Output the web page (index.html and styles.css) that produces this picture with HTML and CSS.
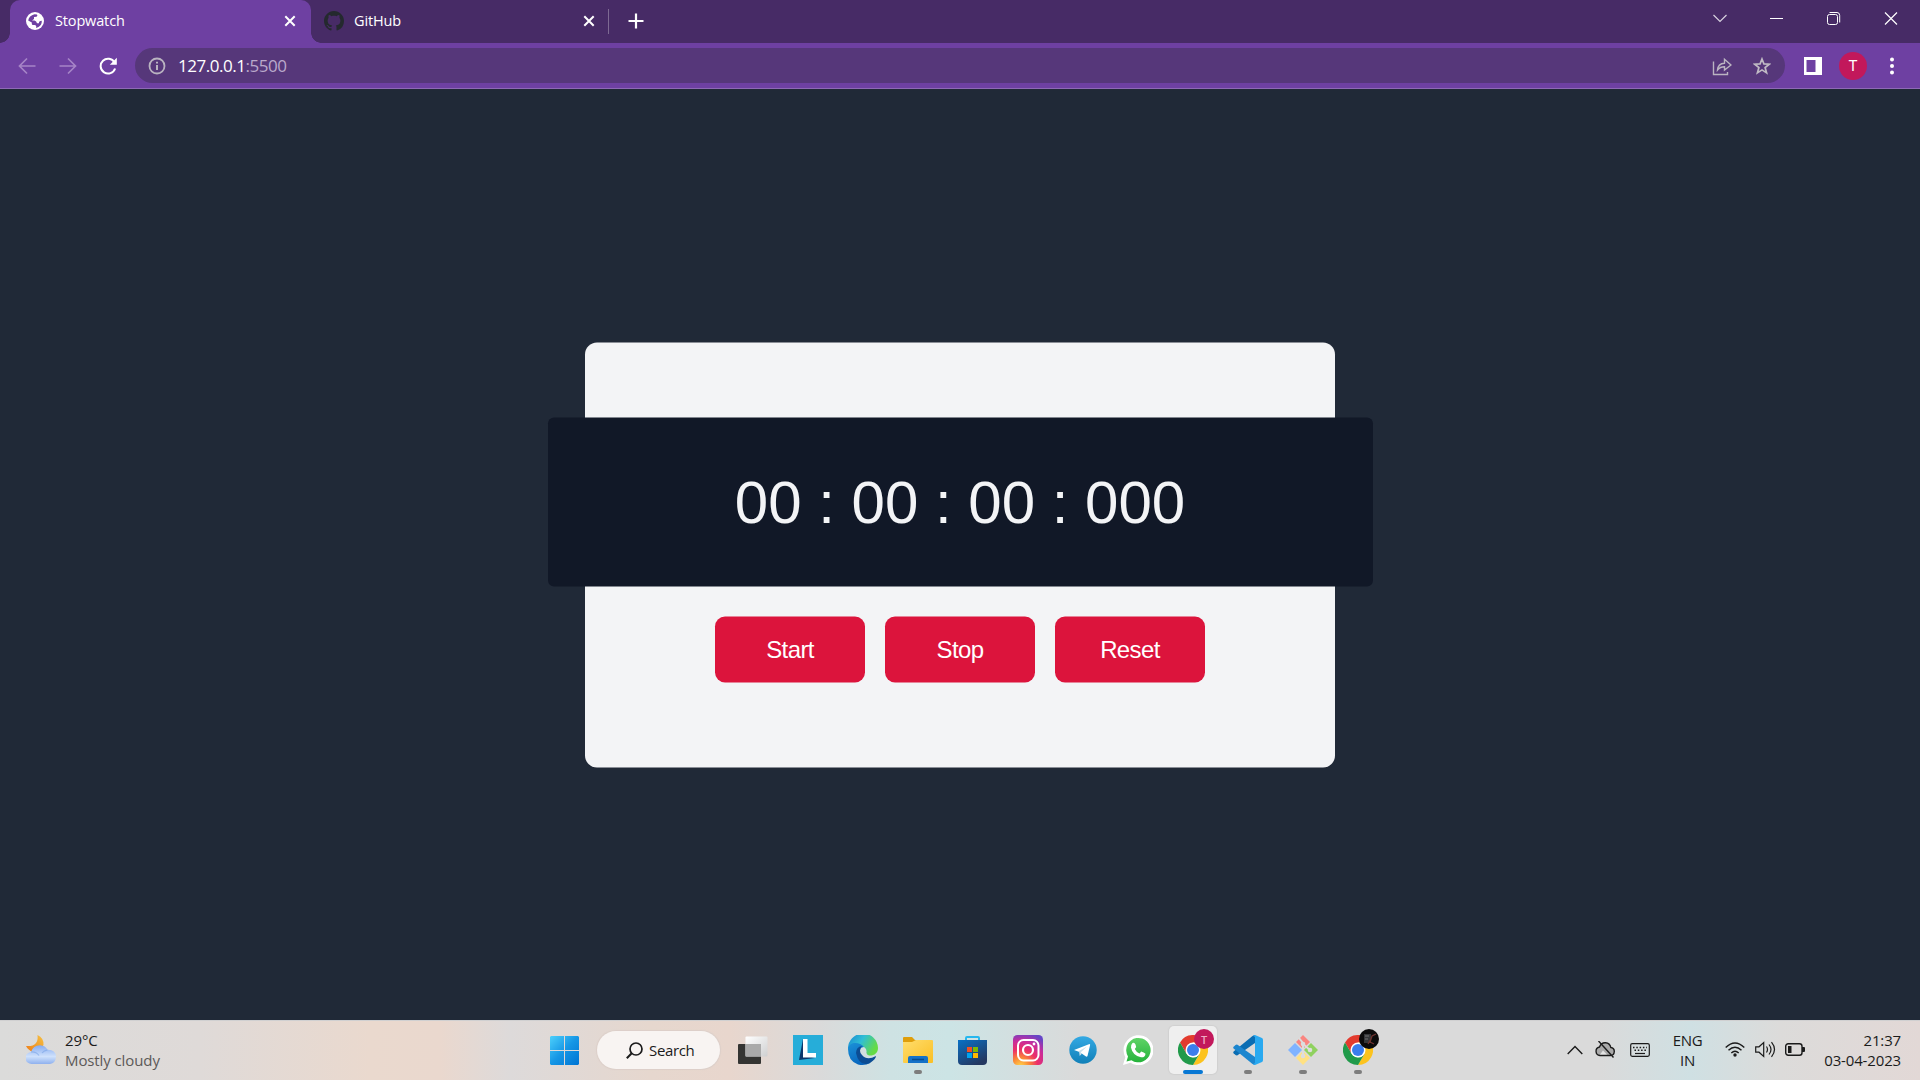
FILE: index.html
```html
<!DOCTYPE html>
<html lang="en">
<head>
<meta charset="utf-8">
<title>Stopwatch</title>
<link rel="stylesheet" href="styles.css">
</head>
<body>
<div class="screen">
  <header class="tabstrip">
    <div class="tab tab-active">
      <svg class="favicon" width="18" height="18" viewBox="0 0 18 18"><circle cx="9" cy="9" r="9" fill="#fff"/><path d="M8.500 2.200Q10 2.200 11 2.500Q12 4 10.500 4.800L8 5V7L6 8.500H8.500Q10.500 9 11 11.200H13Q12.500 9.300 15.800 8.800Q16 13 12.500 15.100L10 15.900Q11 13.500 8.500 13H6.500Q5.500 12 5.800 10.500L2.200 8.500Q3 3.500 8.500 2.200Z" fill="#6e40a2"/></svg>
      <span class="tab-title">Stopwatch</span>
      <svg class="tab-close" width="12" height="12" viewBox="0 0 12 12"><path d="M1.300 1.300L10.700 10.700M10.700 1.300L1.300 10.700" stroke="#fff" stroke-width="2"/></svg>
    </div>
    <div class="tab tab-idle">
      <svg class="favicon" width="20" height="20" viewBox="0 0 16 16"><path fill="#24292e" d="M8 0C3.580 0 0 3.580 0 8c0 3.540 2.290 6.530 5.470 7.590.4.070.55-.17.55-.38 0-.19-.01-.82-.01-1.490-2.010.37-2.530-.49-2.690-.94-.09-.23-.48-.94-.82-1.130-.28-.15-.68-.52-.01-.53.63-.01 1.080.58 1.230.82.72 1.210 1.870.87 2.330.66.07-.52.28-.87.51-1.070-1.780-.2-3.640-.89-3.640-3.950 0-.87.31-1.590.82-2.150-.08-.2-.36-1.020.08-2.120 0 0 .67-.21 2.200.82.64-.18 1.320-.27 2-.27s1.360.09 2 .27c1.530-1.040 2.200-.82 2.200-.82.44 1.100.16 1.920.08 2.120.51.56.82 1.270.82 2.150 0 3.070-1.870 3.750-3.650 3.950.29.25.54.73.54 1.480 0 1.070-.01 1.930-.01 2.200 0 .21.15.46.55.38A8.010 8.010 0 0 0 16 8c0-4.420-3.580-8-8-8z"/></svg>
      <span class="tab-title">GitHub</span>
      <svg class="tab-close" width="12" height="12" viewBox="0 0 12 12"><path d="M1.300 1.300L10.700 10.700M10.700 1.300L1.300 10.700" stroke="#fff" stroke-width="2"/></svg>
    </div>
    <svg class="new-tab" width="16" height="16" viewBox="0 0 16 16"><path d="M8 .5V15.500M.5 8H15.500" stroke="#fff" stroke-width="2.200"/></svg>
    <div class="window-controls">
      <svg width="57" height="36" viewBox="0 0 57 36"><path d="M22.500 15L29 21.500L35.500 15" fill="none" stroke="#d8d2df" stroke-width="1.200"/></svg>
      <svg width="57" height="36" viewBox="0 0 57 36"><path d="M22 18.500H35" stroke="#fff"/></svg>
      <svg width="57" height="36" viewBox="0 0 57 36"><rect x="22.500" y="14.500" width="10" height="10" rx="2" fill="none" stroke="#fff"/><path d="M24.500 12.500H32Q34.700 12.500 34.700 15.500V22.500" fill="none" stroke="#fff"/></svg>
      <svg width="57" height="36" viewBox="0 0 57 36"><path d="M23 12.500L35 24.500M35 12.500L23 24.500" stroke="#fff" stroke-width="1.200"/></svg>
    </div>
  </header>

  <nav class="toolbar">
    <div class="nav-buttons">
      <svg width="18" height="18" viewBox="0 0 18 18"><path d="M17.500 9H2M9 1.500L1.500 9L9 16.500" fill="none" stroke="#a684c7" stroke-width="1.700"/></svg>
      <svg width="18" height="18" viewBox="0 0 18 18"><path d="M.5 9H16M9 1.500L16.500 9L9 16.500" fill="none" stroke="#a684c7" stroke-width="1.700"/></svg>
      <svg width="18" height="18" viewBox="0 0 18 18"><path d="M15.500 5.500A7.400 7.400 0 1 0 16.100 11.500" fill="none" stroke="#fff" stroke-width="2"/><path d="M17.800.8V7.800H10.800Z" fill="#fff"/></svg>
    </div>
    <div class="address">
      <svg class="info" width="18" height="18" viewBox="0 0 18 18"><circle cx="9" cy="9" r="7.500" fill="none" stroke="#b9b3c0" stroke-width="1.800"/><path d="M9 8V13M9 4.700V6.600" stroke="#b9b3c0" stroke-width="2"/></svg>
      <span class="url">127.0.0.1<span class="port">:5500</span></span>
      <svg class="share" width="20" height="20" viewBox="0 0 20 20"><path d="M1.500 5.500V18.500H15.500V16M5.500 14Q6 7.500 12.500 7.200V3.200L19 9L12.500 14V10.800Q8 10.800 5.500 14Z" fill="none" stroke="#bbb4c1" stroke-width="1.400"/></svg>
      <svg class="star" width="18" height="18" viewBox="0 0 18 18"><path d="M9 2L10.900 6.900L16.300 7.200L12.100 10.500L13.600 15.900L9 12.900L4.400 15.900L5.900 10.500L1.700 7.200L7.100 6.900Z" fill="none" stroke="#c0bac4" stroke-width="1.700"/></svg>
    </div>
    <svg class="side-panel" width="18" height="18" viewBox="0 0 18 18"><path fill="#fff" fill-rule="evenodd" d="M0 0H18V18H0ZM2.500 3V15H11.500V3Z"/></svg>
    <span class="avatar">T</span>
    <svg class="kebab" width="4" height="18" viewBox="0 0 4 18"><circle cx="2" cy="2.500" r="2" fill="#fff"/><circle cx="2" cy="9" r="2" fill="#fff"/><circle cx="2" cy="15.500" r="2" fill="#fff"/></svg>
  </nav>

  <main class="page">
    <section class="stopwatch">
      <div class="display">00 : 00 : 00 : 000</div>
      <div class="buttons">
        <button class="button">Start</button>
        <button class="button">Stop</button>
        <button class="button">Reset</button>
      </div>
    </section>
  </main>

  <footer class="taskbar">
    <div class="weather">
      <svg width="30" height="30" viewBox="0 0 30 30">
        <defs><linearGradient id="cloud" x1="0" y1="0" x2="0" y2="1"><stop offset="0" stop-color="#85abf0"/><stop offset=".6" stop-color="#cfe1fc"/><stop offset="1" stop-color="#8fb1ee"/></linearGradient><linearGradient id="moon" x1="1" y1="0" x2="0" y2="1"><stop stop-color="#f5c142"/><stop offset="1" stop-color="#ee7d18"/></linearGradient></defs>
        <path d="M11.500 0Q18 3 17.500 10Q14 17 7 17Q2 15 0 11Q13 12 11.500 0Z" fill="url(#moon)"/>
        <path d="M6 29A6 6 0 0 1 5 17Q7 10.500 14 10.200Q19.500 10.500 21.500 14.800Q29.500 14.500 30 21.500Q29.500 28.500 24 29Z" fill="url(#cloud)"/>
        <path d="M5 17Q10 16.500 13 20.500M16 18Q18 15.500 21.500 14.800" fill="none" stroke="#7aa3e6" stroke-width="1.200" opacity=".6"/></svg>
      <div class="weather-text"><span class="temp">29°C</span><span class="condition">Mostly cloudy</span></div>
    </div>

    <div class="apps">
      <svg class="start" width="29" height="29" viewBox="0 0 29 29"><defs><linearGradient id="win" x1="0" y1="0" x2="1" y2="1"><stop stop-color="#4dd0fb"/><stop offset=".5" stop-color="#1596e5"/><stop offset="1" stop-color="#0074d3"/></linearGradient></defs><path d="M1 0H14V14H0V1ZM15 0H28L29 1V14H15ZM0 15H14V29H1L0 28ZM15 15H29V28L28 29H15Z" fill="url(#win)"/></svg>
      <div class="search">
        <svg width="17" height="17" viewBox="0 0 17 17"><circle cx="10" cy="7" r="6" fill="none" stroke="#1b1b1b" stroke-width="1.700"/><path d="M5.700 11.300L.8 16.200" stroke="#1b1b1b" stroke-width="2"/></svg>
        <span>Search</span>
      </div>
      <div class="app">
        <svg width="30" height="30" viewBox="0 0 30 30"><defs><linearGradient id="tv" x1="0" y1="0" x2="1" y2="1"><stop stop-color="#fff"/><stop offset="1" stop-color="#cfd0d1"/></linearGradient></defs><rect x="0" y="9" width="23" height="20" rx="1" fill="#343432"/><rect x="7.500" y="1.500" width="22" height="20" rx="1" fill="url(#tv)"/><path d="M7.500 9H23V21.500H7.500Z" fill="#aaa"/></svg>
      </div>
      <div class="app">
        <svg width="30" height="30" viewBox="0 0 30 30"><path d="M0 0H30V30H0Z" fill="#26add9"/><path d="M10 4L6 25L22 23L12 20Z" fill="#0b376b"/><path d="M10 4H14.500V18H23V22.500H10Z" fill="#fff"/></svg>
      </div>
      <div class="app">
        <svg width="30" height="30" viewBox="0 0 30 30"><defs><linearGradient id="ea" x1="0" y1="0" x2="1" y2=".45"><stop stop-color="#1686d3"/><stop offset=".5" stop-color="#30bed5"/><stop offset="1" stop-color="#65db45"/></linearGradient><linearGradient id="eb" x1="0" y1="0" x2=".5" y2="1"><stop stop-color="#1b91d8"/><stop offset="1" stop-color="#0865bd"/></linearGradient></defs><path d="M0 14A15 15 0 0 1 30 13C30 18 26 21 21 20.500Q18 20 18.500 17Q19 13 14 11Q8 8 0 14Z" fill="url(#ea)"/><path d="M0 14C1 6 12 7 16 12Q11 12 11 18Q12 27 22 28Q17 31 10 29.500Q0 26 0 14Z" fill="url(#eb)"/><path d="M8 18Q8 12 14 11Q10 16 14 20Q19 26 28 21Q28 24 22 28Q11 32 8 18Z" fill="#0c4d94"/></svg>
      </div>
      <div class="app">
        <svg width="30" height="28" viewBox="0 0 30 28"><defs><linearGradient id="fo" x1="0" y1="0" x2="1" y2="1"><stop stop-color="#ffdd6c"/><stop offset="1" stop-color="#fabf25"/></linearGradient></defs><path d="M0 2Q0 1 1 1H9L12 4H29V9H0Z" fill="#df9e0b"/><path d="M0 6H9L13 4H29Q30 4 30 5V26Q30 27 29 27H1Q0 27 0 26Z" fill="url(#fo)"/><path d="M5 27V22Q5 20 7 20H23Q25 20 25 22V27Z" fill="#1472c8"/><path d="M9 23.500H21" stroke="#064b8e" stroke-width="1.500"/></svg>
        <i class="running"></i>
      </div>
      <div class="app">
        <svg width="29" height="30" viewBox="0 0 29 30"><defs><linearGradient id="st" x1="0" y1="0" x2=".6" y2="1"><stop stop-color="#0871c6"/><stop offset="1" stop-color="#243861"/></linearGradient></defs><path d="M8 6V3Q8 2 9 2H20Q21 2 21 3V6" fill="none" stroke="#25b7ee" stroke-width="2"/><path d="M0 5H29V26Q29 30 25 30H4Q0 30 0 26Z" fill="url(#st)"/><path d="M9 12H14V17H9Z" fill="#f25022"/><path d="M15 12H20V17H15Z" fill="#7fba00"/><path d="M9 18H14V23H9Z" fill="#00a4ef"/><path d="M15 18H20V23H15Z" fill="#ffb900"/></svg>
      </div>
      <div class="app">
        <svg width="30" height="30" viewBox="0 0 30 30"><defs><radialGradient id="ig" cx=".25" cy="1.050" r="1.150"><stop stop-color="#ffd84c"/><stop offset=".25" stop-color="#fb8a36"/><stop offset=".5" stop-color="#ec2f68"/><stop offset=".75" stop-color="#c72c9d"/><stop offset="1" stop-color="#6545c7"/></radialGradient></defs><rect width="30" height="30" rx="4.500" fill="url(#ig)"/><rect x="5" y="5" width="20.500" height="20.500" rx="5.500" fill="none" stroke="#fff" stroke-width="2"/><circle cx="15" cy="15" r="5" fill="none" stroke="#fff" stroke-width="2.200"/><circle cx="21" cy="9" r="1.400" fill="#fff"/></svg>
      </div>
      <div class="app">
        <svg width="28" height="28" viewBox="0 0 28 28"><defs><linearGradient id="tg" x1="0" y1="0" x2="0" y2="1"><stop stop-color="#34a9e3"/><stop offset="1" stop-color="#1180b8"/></linearGradient></defs><circle cx="14" cy="14" r="13.700" fill="url(#tg)"/><path d="M5 14L20.500 8Q21.500 8 21 9.500L18.500 20Q18 21 17 20.500L10.500 16Z" fill="#fff"/><path d="M10 15L10.700 20L13 17.500L11.500 16.500L18 10.500Z" fill="#c9dfeb"/></svg>
      </div>
      <div class="app">
        <svg width="30" height="30" viewBox="0 0 30 30"><defs><linearGradient id="wa" x1="0" y1="0" x2="0" y2="1"><stop stop-color="#60d367"/><stop offset="1" stop-color="#25b33b"/></linearGradient></defs><path d="M0 30L2.300 22.200A15 15 0 1 1 7.500 27.800Z" fill="#fff"/><path d="M3.500 26.500L5 21.500A12.200 12.200 0 1 1 8.500 25.200Z" fill="url(#wa)"/><path d="M9.500 8Q11.500 7 12.500 9.500L13.200 12L11.800 14Q13.500 17.500 16.500 18.500L18.200 16.600Q21 17.500 22.500 18.700Q22.300 22.500 18 22.300Q9.500 20.500 8 12.500Q7.800 9.500 9.500 8Z" fill="#fff"/></svg>
      </div>
      <div class="app app-focused">
        <svg width="30" height="30" viewBox="0 0 30 30"><path d="M2 7.500A15 15 0 0 1 28 7.500H15L8.500 18.700Z" fill="#e33b2e"/><path d="M28 7.500A15 15 0 0 1 15 30L21.500 18.700L15 7.500Z" fill="#fcc31e"/><path d="M15 30A15 15 0 0 1 2 7.500L8.500 18.700Q13 23.500 18.500 22L21.500 18.700Z" fill="#219a4a"/><circle cx="15" cy="15" r="7.500" fill="#fff"/><circle cx="15" cy="15" r="6" fill="#3b7ded"/></svg>
        <span class="badge badge-t">T</span>
        <i class="running running-focused"></i>
      </div>
      <div class="app">
        <svg width="30" height="30" viewBox="0 0 30 30"><path d="M22 .3V8L4.500 20.300Q3.500 20.800 2.500 20L.6 18.300Q-.2 17.300.6 16.400L19.500 1Q21 0 22 .3Z" fill="#0a6db3"/><path d="M22 29.700V22L4.500 9.700Q3.500 9.200 2.500 10L.6 11.700Q-.2 12.700.6 13.600L19.500 29Q21 30 22 29.700Z" fill="#1c86cf"/><path d="M22 0L29 3Q30 3.500 30 5V25Q30 26.500 29 27L22 30Q21 30 20 29.200L22 28V2L20 .8Q21 0 22 0Z" fill="#29a9f0"/></svg>
        <i class="running"></i>
      </div>
      <div class="app">
        <svg width="30" height="30" viewBox="0 0 30 30"><path d="M15 0L22 7L15 14L8 7Z" fill="#fa8580"/><path d="M7 8L14 15L7 22L0 15Z" fill="#80b3ff"/><path d="M23 8L30 15L23 22L16 15Z" fill="#8fd15f"/><path d="M15 16L22 23L15 30L8 23Z" fill="#ffe183"/><path d="M11 3L15 8V22M15 9L22 15" fill="none" stroke="#ddd" stroke-width="2"/><circle cx="15" cy="9" r="2.300" fill="#ddd"/><circle cx="22" cy="15" r="2.300" fill="#ddd"/><circle cx="15" cy="21" r="2.300" fill="#ddd"/></svg>
        <i class="running"></i>
      </div>
      <div class="app">
        <svg width="30" height="30" viewBox="0 0 30 30"><path d="M2 7.500A15 15 0 0 1 28 7.500H15L8.500 18.700Z" fill="#e33b2e"/><path d="M28 7.500A15 15 0 0 1 15 30L21.500 18.700L15 7.500Z" fill="#fcc31e"/><path d="M15 30A15 15 0 0 1 2 7.500L8.500 18.700Q13 23.500 18.500 22L21.500 18.700Z" fill="#219a4a"/><circle cx="15" cy="15" r="7.500" fill="#fff"/><circle cx="15" cy="15" r="6" fill="#3b7ded"/></svg>
        <span class="badge badge-dark"><svg width="20" height="20" viewBox="0 0 20 20"><path d="M5 5H12V14H5Z" fill="#343638"/><path d="M6 7H10M6 10H9" stroke="#707070"/><path d="M17 5L13 7L11 13L15 15M12 10L9 15" fill="none" stroke="#70332f" stroke-width="1.300"/></svg></span>
        <i class="running"></i>
      </div>
    </div>

    <div class="tray">
      <svg class="tray-up" width="16" height="10" viewBox="0 0 16 10"><path d="M.7 9L8 1.500L15.300 9" fill="none" stroke="#1b1b1b" stroke-width="1.400"/></svg>
      <svg class="tray-cloud" width="20" height="18" viewBox="0 0 20 18"><path d="M5 14.500A4.300 4.300 0 0 1 4.500 6Q6 1.500 10.500 1.700Q15 2 15.800 6.500Q19.300 7 19.300 10.500Q19 14.500 15.500 14.500Z" fill="#aaa" stroke="#1b1b1b" stroke-width="1.400"/><path d="M5 13.500L8 9.500L12 13.500Z" fill="#e4e4e4"/><path d="M3.500 0L18.500 16.500" stroke="#1b1b1b" stroke-width="1.400"/></svg>
      <svg class="tray-keyboard" width="20" height="14" viewBox="0 0 20 14"><rect x=".7" y=".7" width="18.600" height="12.600" rx="1.500" fill="none" stroke="#1b1b1b" stroke-width="1.200"/><path d="M3 4.500H17M4.500 7.300H16" stroke="#1b1b1b" stroke-width="1.500" stroke-dasharray="1.500 1.800"/><path d="M5 10.500H15" stroke="#1b1b1b" stroke-width="1.200"/></svg>
      <div class="language"><span>ENG</span><span>IN</span></div>
      <svg class="tray-wifi" width="20" height="15" viewBox="0 0 20 15"><path d="M.7 5.500Q10-3.500 19.300 5.500M3.500 8.300Q10 2 16.500 8.300M6.300 11Q10 7.500 13.700 11" fill="none" stroke="#1b1b1b" stroke-width="1.400"/><circle cx="10" cy="13" r="1.700" fill="#1b1b1b"/></svg>
      <svg class="tray-volume" width="21" height="17" viewBox="0 0 21 17"><path d="M.7 5.800H4L8.700 1.500V15.500L4 11.200H.7ZM11.500 5.500Q13.500 8.500 11.500 11.500M14 3.500Q18 8.500 14 13.500M16.500 1.200Q22.500 8.500 16.500 15.800" fill="none" stroke="#1b1b1b" stroke-width="1.200"/></svg>
      <svg class="tray-battery" width="20" height="13" viewBox="0 0 20 13"><rect x=".7" y=".7" width="16.300" height="11.600" rx="2.500" fill="none" stroke="#1b1b1b" stroke-width="1.400"/><path d="M3 3H6.500V10H3ZM17 4H19Q20 4 20 5V8Q20 9 19 9H17Z" fill="#1b1b1b"/></svg>
      <div class="clock"><span class="time">21:37</span><span class="date">03-04-2023</span></div>
    </div>
  </footer>
</div>
</body>
</html>
```
FILE: styles.css
```css
* { box-sizing: border-box; }
body { margin: 0; }
svg { display: block; flex: none; }

.screen {
  display: flex;
  flex-direction: column;
  width: 1920px;
  height: 1080px;
  overflow: hidden;
  font-family: "Open Sans", "Noto Sans", sans-serif;
  font-size: 15px;
  background: #202937;
}

/* Browser tabs */
.tabstrip {
  display: flex;
  height: 43px;
  padding-left: 10px;
  background: #472b66;
  color: #fff;
}
.tab {
  position: relative;
  display: flex;
  align-items: center;
  height: 42px;
}
.tab-active {
  width: 301px;
  height: 43px;
  padding: 0 15px 1px 16px;
  border-radius: 10px 10px 0 0;
  background: #6e40a2;
}
.tab-active::before,
.tab-active::after {
  content: "";
  position: absolute;
  bottom: 0;
  width: 10px;
  height: 10px;
}
.tab-active::before {
  left: -10px;
  background: radial-gradient(circle at 0 0, transparent 9.5px, #6e40a2 10px);
}
.tab-active::after {
  right: -10px;
  background: radial-gradient(circle at 100% 0, transparent 9.5px, #6e40a2 10px);
}
.tab-idle {
  width: 298px;
  padding: 0 14px 0 13px;
}
.tab-idle::after {
  content: "";
  position: absolute;
  right: 0;
  top: 9px;
  width: 1px;
  height: 25px;
  background: #7e6a93;
}
.tab-title {
  flex: 1;
  margin-left: 11px;
  font-size: 14.5px;
  line-height: 20px;
  letter-spacing: -0.15px;
}
.tab-idle .tab-title { margin-left: 10px; }
.new-tab { margin: 13px 0 0 19px; }
.window-controls { display: flex; margin: 0 1px 0 auto; }

/* Address row */
.toolbar {
  display: flex;
  align-items: center;
  height: 46px;
  padding-left: 18px;
  border-bottom: 1px solid #8e69b5;
  background: #6e40a2;
}
.nav-buttons { display: flex; gap: 22.5px; width: 117px; }
.address {
  display: flex;
  align-items: center;
  width: 1650px;
  height: 35px;
  padding: 0 14px 0 13px;
  border-radius: 18px;
  background: #56377a;
}
.url {
  flex: 1;
  margin-left: 12px;
  color: #fff;
  font-size: 17px;
  line-height: 24px;
  letter-spacing: -0.47px;
}
.port { color: #baa9cb; }
.share { margin-right: 21px; }
.side-panel { margin-left: 19px; }
.avatar {
  display: flex;
  align-items: center;
  justify-content: center;
  width: 28px;
  height: 28px;
  margin-left: 17px;
  border-radius: 50%;
  background: #c2185b;
  color: #fff;
  font-family: Roboto, sans-serif;
  font-size: 15px;
}
.kebab { margin-left: 23px; }

/* Stopwatch */
.page {
  flex: 1;
  display: flex;
  align-items: center;
  justify-content: center;
  padding-top: 2px;
  background: #202937;
  font-family: "Liberation Sans", Arial, sans-serif;
}
.stopwatch {
  display: flex;
  flex-direction: column;
  align-items: center;
  width: 750px;
  height: 425px;
  padding-top: 75px;
  border-radius: 12px;
  background: #f3f4f6;
  transform: translateY(-0.5px);
}
.display {
  flex: none;
  width: 825px;
  height: 169px;
  border-radius: 6px;
  background: #111827;
  color: #f3f4f6;
  font-size: 60px;
  line-height: 169px;
  text-align: center;
}
.buttons { display: flex; gap: 20px; margin-top: 30px; }
.button {
  width: 150px;
  height: 66px;
  padding: 0 0 1px;
  border: 0;
  border-radius: 10px;
  background: #dc143c;
  color: #fff;
  font: 24px/65px "Liberation Sans", Arial, sans-serif;
  letter-spacing: -0.6px;
}

/* Taskbar */
.taskbar {
  display: flex;
  height: 60px;
  border-top: 1px solid #d0d0d1;
  background: linear-gradient(90deg, #dbdbda 0, #dfdad8 200px, #ead9ce 370px, #ead8ce 440px, #dddada 510px, #e6d7ce 650px, #e8d6cd 730px, #dadada 820px, #cee2e3 890px, #cce4e5 950px, #dadada 1080px, #dadada 1600px, #cfe0e3 1690px, #dcdbda 1780px, #e2d8d6 1920px);
  color: #1b1b1b;
}
.weather { display: flex; width: 550px; padding: 14px 0 0 26px; }
.weather-text {
  display: flex;
  flex-direction: column;
  margin: -5px 0 0 9px;
  line-height: 20px;
  letter-spacing: -0.1px;
}
.condition { color: #5c5958; }
.apps { display: flex; align-items: center; padding-bottom: 1px; }
.search {
  display: flex;
  align-items: center;
  gap: 6px;
  width: 123px;
  height: 38px;
  margin: 0 5px 0 18px;
  padding-left: 29px;
  border-radius: 19px;
  background: #f8f4f2;
  box-shadow: 0 0 1px 1px #dccfc9;
  letter-spacing: -0.35px;
}
.app {
  position: relative;
  display: flex;
  align-items: center;
  justify-content: center;
  width: 55px;
  height: 50px;
}
.app > svg { position: relative; }
.app-focused::before {
  content: "";
  position: absolute;
  inset: 1px 3px 1px 4px;
  border-radius: 5px;
  background: #efefef;
  box-shadow: 0 0 1px 1px #d0d0d0;
}
.running {
  position: absolute;
  left: 24px;
  bottom: 1px;
  width: 8px;
  height: 4px;
  border-radius: 2px;
  background: #7d7d7d;
}
.running-focused { left: 18px; width: 20px; background: #0878d4; }
.badge {
  position: absolute;
  display: flex;
  align-items: center;
  justify-content: center;
  top: 4px;
  right: 6px;
  width: 20px;
  height: 20px;
  border-radius: 50%;
  color: #efa9c4;
  font-size: 11px;
  font-weight: 600;
}
.badge-t { background: #c2185b; }
.badge-dark { background: #0b0b0b; }
.tray { display: flex; align-items: center; margin-left: auto; padding: 0 19px 2px 0; }
.tray-cloud { margin-left: 12px; }
.tray-keyboard { margin-left: 15px; }
.language {
  display: flex;
  flex-direction: column;
  align-items: center;
  width: 75px;
  line-height: 20px;
  letter-spacing: -0.3px;
}
.tray-volume { margin-left: 10px; }
.tray-battery { margin-left: 9px; }
.clock {
  display: flex;
  flex-direction: column;
  align-items: flex-end;
  width: 96px;
  line-height: 20px;
  letter-spacing: -0.15px;
}
```
